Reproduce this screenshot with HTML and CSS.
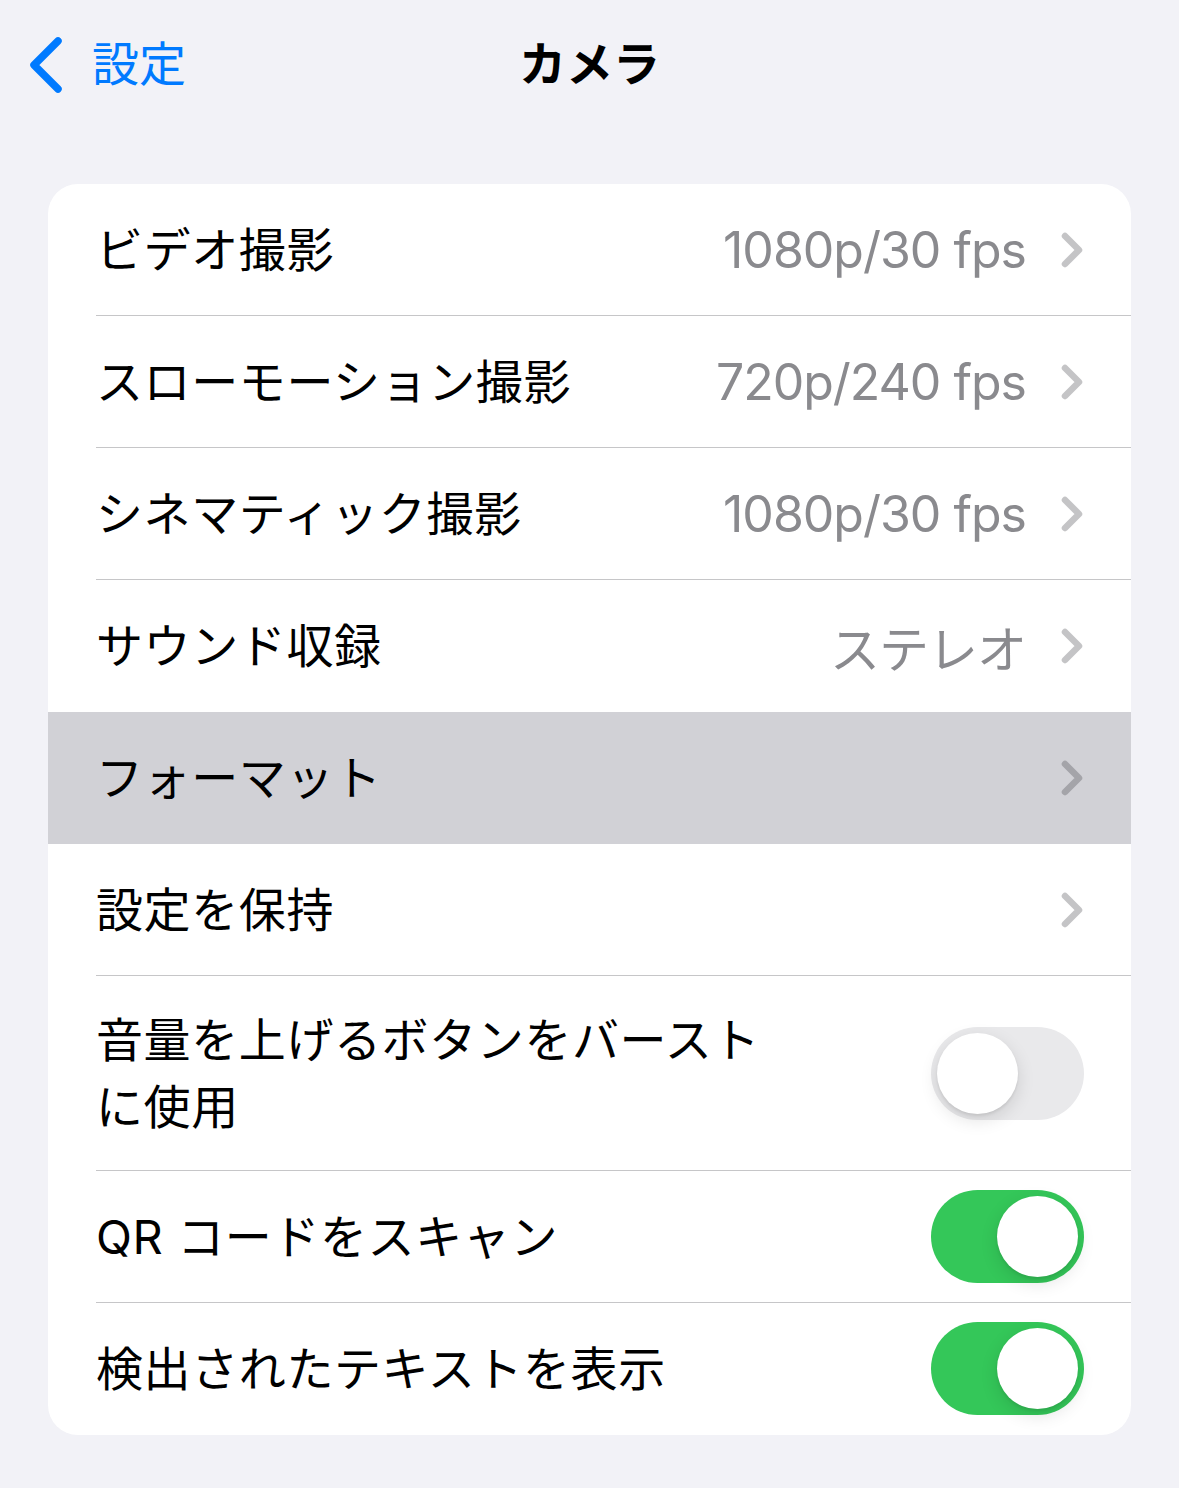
FILE: index.html
```html
<!DOCTYPE html>
<html>
<head>
    <meta charset="utf-8">
    <title>カメラ</title>
    <link rel="stylesheet" href="styles.css">
</head>
<body>
    <div class="navbar">
        <a class="back" href="#">
            <svg class="back-icon" width="35" height="56" viewBox="0 0 35 56">
                <path d="M31 4 L7 28 L31 52" fill="none" stroke="#007aff" stroke-width="7.5" stroke-linecap="round" stroke-linejoin="round"/>
            </svg>
            <span class="back-text">設定</span>
        </a>
        <h1 class="title">カメラ</h1>
        <div></div>
    </div>

    <div class="group">
        <div class="row">
            <div class="row-inner">
                <span class="label">ビデオ撮影</span>
                <span class="value">1080p/30 fps</span>
                <svg class="chevron" width="22" height="36" viewBox="0 0 22 36"><path d="M4 4 L18 18 L4 32"/></svg>
            </div>
        </div>
        <div class="row">
            <div class="row-inner">
                <span class="label">スローモーション撮影</span>
                <span class="value">720p/240 fps</span>
                <svg class="chevron" width="22" height="36" viewBox="0 0 22 36"><path d="M4 4 L18 18 L4 32"/></svg>
            </div>
        </div>
        <div class="row">
            <div class="row-inner">
                <span class="label">シネマティック撮影</span>
                <span class="value">1080p/30 fps</span>
                <svg class="chevron" width="22" height="36" viewBox="0 0 22 36"><path d="M4 4 L18 18 L4 32"/></svg>
            </div>
        </div>
        <div class="row">
            <div class="row-inner no-sep">
                <span class="label">サウンド収録</span>
                <span class="value">ステレオ</span>
                <svg class="chevron" width="22" height="36" viewBox="0 0 22 36"><path d="M4 4 L18 18 L4 32"/></svg>
            </div>
        </div>
        <div class="row selected">
            <div class="row-inner no-sep">
                <span class="label">フォーマット</span>
                <svg class="chevron" width="22" height="36" viewBox="0 0 22 36"><path d="M4 4 L18 18 L4 32"/></svg>
            </div>
        </div>
        <div class="row">
            <div class="row-inner">
                <span class="label">設定を保持</span>
                <svg class="chevron" width="22" height="36" viewBox="0 0 22 36"><path d="M4 4 L18 18 L4 32"/></svg>
            </div>
        </div>
        <div class="row">
            <div class="row-inner tall">
                <span class="label">音量を上げるボタンをバースト<br>に使用</span>
                <span class="switch"><span class="knob"></span></span>
            </div>
        </div>
        <div class="row">
            <div class="row-inner">
                <span class="label">QR コードをスキャン</span>
                <span class="switch on"><span class="knob"></span></span>
            </div>
        </div>
        <div class="row">
            <div class="row-inner no-sep">
                <span class="label">検出されたテキストを表示</span>
                <span class="switch on"><span class="knob"></span></span>
            </div>
        </div>
    </div>
</body>
</html>
```

FILE: styles.css
```css
body {
    margin: 0;
    background-color: #f2f2f7;
    font-family: Inter, "Noto Sans CJK JP", sans-serif;
    color: #000;
}
.navbar {
    display: grid;
    grid-template-columns: 1fr auto 1fr;
    align-items: center;
    height: 130px;
}
.back {
    display: flex;
    align-items: center;
    gap: 30px;
    padding-left: 27px;
    color: #007aff;
    text-decoration: none;
    font-size: 47px;
}
.back-icon {
    display: block;
}
.back-text {
    margin-bottom: 9px;
}
.title {
    margin: 0 0 9px;
    font-size: 47px;
    font-weight: 700;
}
.group {
    margin: 54px 48px 0;
    background-color: #fff;
    border-radius: 30px;
    overflow: hidden;
}
.row {
    padding-left: 48px;
}
.row.selected {
    background-color: #d1d1d6;
}
.row-inner {
    display: flex;
    align-items: center;
    min-height: 131px;
    padding-right: 48px;
    border-bottom: 1px solid #c6c6c8;
}
.row-inner.no-sep {
    border-bottom-color: transparent;
}
.row-inner.tall {
    min-height: 194px;
}
.label {
    flex: 1;
    font-size: 47px;
    letter-spacing: 0.6px;
    line-height: 67px;
}
.value {
    margin-right: 35px;
    font-size: 50px;
    color: #8a8a8e;
    letter-spacing: -1px;
}
.chevron {
    display: block;
}
.chevron path {
    fill: none;
    stroke: rgba(60, 60, 67, 0.3);
    stroke-width: 6.5;
    stroke-linecap: round;
    stroke-linejoin: round;
}
.switch {
    position: relative;
    width: 153px;
    height: 93px;
    border-radius: 47px;
    background-color: #e9e9eb;
    margin-right: -1px;
}
.switch .knob {
    position: absolute;
    top: 6px;
    left: 6px;
    width: 81px;
    height: 81px;
    border-radius: 50%;
    background-color: #fff;
    box-shadow: 0 6px 18px rgba(0,0,0,0.12), 0 2px 3px rgba(0,0,0,0.08);
}
.switch.on {
    background-color: #34c759;
}
.switch.on .knob {
    left: 66px;
}
```
